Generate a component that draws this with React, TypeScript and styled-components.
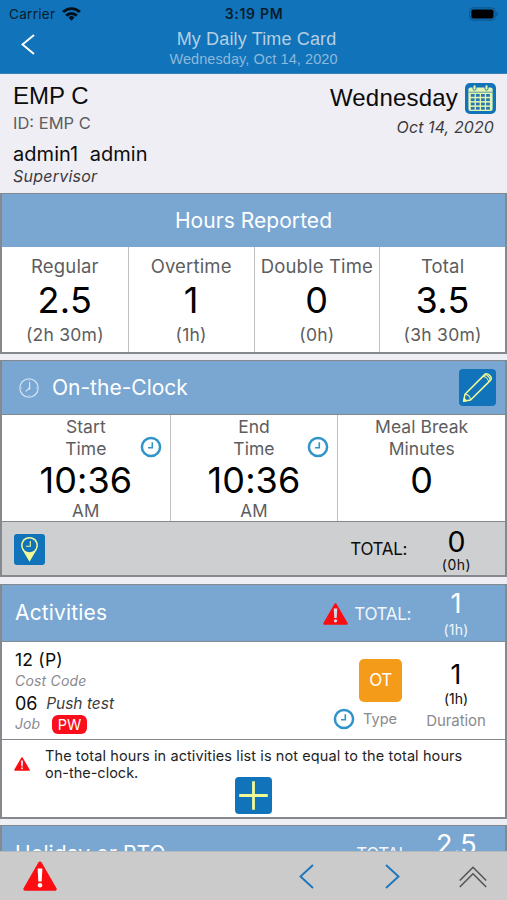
import React from 'react';
import styled, { createGlobalStyle } from 'styled-components';

const sans = 'Inter, "Liberation Sans", sans-serif';
const grotesk = '"Liberation Sans", Arial, sans-serif';
const edge = '#85898d';
const brand = '#1173ba';
const lemon = '#f0fa96';

const GlobalStyle = createGlobalStyle`
  *, *::before, *::after { box-sizing: border-box; }
  body { margin: 0; background: #efeef4; font-family: ${sans}; color: #0c0c0c; }
  svg { display: block; flex: none; }
`;

const Screen = styled.div`
  display: flex;
  flex-direction: column;
  width: 507px;
  height: 900px;
  overflow: hidden;
  background: #efeef4;
`;

const Label = styled.div<{ $size: number; $line: number; $color?: string; $track?: number; $italic?: boolean; $bold?: boolean; $grotesk?: boolean }>`
  font-family: ${p => (p.$grotesk ? grotesk : sans)};
  font-size: ${p => p.$size}px;
  line-height: ${p => p.$line}px;
  color: ${p => p.$color ?? '#0c0c0c'};
  letter-spacing: ${p => p.$track ?? 0}px;
  font-style: ${p => (p.$italic ? 'italic' : 'normal')};
  font-weight: ${p => (p.$bold ? 600 : 400)};
  white-space: pre;
`;

const Header = styled.header`
  flex: none;
  height: 74px;
  background: ${brand};
  border-bottom: 1px solid #3b82b8;
`;

const StatusBar = styled.div`
  display: grid;
  grid-template-columns: 1fr auto 1fr;
  align-items: center;
  height: 28px;
  padding: 0 8px 0 9px;
`;

const Carrier = styled.div`
  display: flex;
  align-items: center;
  gap: 7px;
`;

const BatterySlot = styled.div`
  justify-self: end;
`;

const NavBar = styled.div`
  display: grid;
  grid-template-columns: 60px 1fr 60px;
  height: 40px;
`;

const BackButton = styled.div`
  padding: 6px 0 0 21px;
`;

const NavTitle = styled.div`
  display: flex;
  flex-direction: column;
  align-items: center;
`;

const NavHeading = styled(Label)`
  padding-left: 6px;
`;

const Person = styled.section`
  flex: none;
  display: flex;
  justify-content: space-between;
  height: 119px;
  padding: 8px 11px 0 13px;
`;

const DayColumn = styled.div`
  display: flex;
  flex-direction: column;
  align-items: flex-end;
`;

const DayRow = styled.div`
  display: flex;
  align-items: center;
  gap: 7px;
  height: 32px;
`;

const DateLabel = styled(Label)`
  padding-right: 2px;
`;

const Panel = styled.section<{ $height: number; $gap?: number }>`
  flex: none;
  display: flex;
  flex-direction: column;
  height: ${p => p.$height}px;
  margin-bottom: ${p => p.$gap ?? 6}px;
  border: 1px solid ${edge};
  border-width: 1px 2px 2px;
  background: #fff;
`;

const PanelHeader = styled.div<{ $height: number; $center?: boolean; $ruled?: boolean }>`
  flex: none;
  display: flex;
  align-items: center;
  justify-content: ${p => (p.$center ? 'center' : 'flex-start')};
  height: ${p => p.$height}px;
  padding: ${p => (p.$center ? '0' : '0 4px 0 13px')};
  background: #79a7d2;
  border-bottom: ${p => (p.$ruled ? `1px solid ${edge}` : '0')};
`;

const ClockTitle = styled.div`
  display: flex;
  align-items: center;
  gap: 13px;
  padding-left: 4px;
`;

const IconInset = styled.div`
  padding-right: 5px;
`;

const Grow = styled.div`
  flex: 1;
`;

const Columns = styled.div<{ $count: number; $height: number }>`
  display: grid;
  grid-template-columns: repeat(${p => p.$count}, 1fr);
  height: ${p => p.$height}px;
`;

const Cell = styled.div<{ $top: number }>`
  position: relative;
  display: flex;
  flex-direction: column;
  align-items: center;
  padding-top: ${p => p.$top}px;
  & + & { border-left: 1px solid #bfc0c2; }
`;

const ClockBadge = styled.div`
  position: absolute;
  right: 8px;
  top: 21px;
`;

const TotalsBar = styled.div`
  display: flex;
  align-items: center;
  flex: 1;
  padding: 1px 3px 0 12px;
  background: #cecfd1;
  border-top: 1px solid ${edge};
`;

const ValueColumn = styled.div<{ $top: number; $width?: number }>`
  align-self: stretch;
  display: flex;
  flex-direction: column;
  align-items: center;
  width: ${p => p.$width ?? 90}px;
  padding-top: ${p => p.$top}px;
`;

const TotalLabel = styled.div`
  display: flex;
  align-items: center;
  gap: 6px;
  padding-top: 1px;
`;

const ClockTotalLabel = styled(Label)`
  padding-right: 4px;
`;

const Activity = styled.div`
  flex: none;
  display: flex;
  height: 98px;
  padding: 6px 0 0 13px;
  border-bottom: 1px solid ${edge};
`;

const ActivityInfo = styled.div`
  flex: 1;
`;

const JobRow = styled.div`
  display: flex;
  align-items: center;
  gap: 9px;
`;

const TagRow = styled.div`
  display: flex;
  align-items: center;
  gap: 12px;
  height: 16px;
`;

const PayTag = styled.div`
  width: 35px;
  height: 19px;
  border-radius: 6px;
  background: #fb0d1b;
  color: #fff;
  font-size: 14.5px;
  line-height: 19px;
  text-align: center;
`;

const TypeColumn = styled.div`
  display: flex;
  flex-direction: column;
  align-items: flex-end;
  width: 80px;
  padding-top: 11px;
`;

const TypeTile = styled.div`
  width: 43px;
  height: 43px;
  margin-bottom: 6px;
  border-radius: 5px;
  background: #f49c1a;
  color: #fff;
  font-size: 17px;
  letter-spacing: -0.5px;
  line-height: 43px;
  text-align: center;
`;

const TypeCaption = styled.div`
  display: flex;
  align-items: center;
  gap: 8px;
  padding-right: 5px;
`;

const Duration = styled.div`
  display: flex;
  flex-direction: column;
  align-items: center;
  width: 98px;
  margin-left: 5px;
  padding-top: 11px;
`;

const Notice = styled.div`
  display: flex;
  gap: 15px;
  height: 37px;
  padding: 7px 0 0 12px;
`;

const NoticeIcon = styled.div`
  padding-top: 10px;
`;

const AddRow = styled.div`
  display: flex;
  justify-content: center;
`;

const Footer = styled.footer`
  position: absolute;
  top: 852px;
  left: 0;
  display: flex;
  align-items: flex-start;
  width: 507px;
  height: 48px;
  padding: 9px 20px 0 23px;
  background: #cbcbcb;
  box-shadow: 0 -1px 0 #b3b8bd;
`;

const Pager = styled.div`
  display: flex;
  gap: 71px;
  padding: 3px 59px 0 0;
`;

const Collapse = styled.div`
  padding-top: 4px;
`;

const WarningIcon = ({ w, h, mark = '#d5dbe8' }: { w: number; h: number; mark?: string }) => (
  <svg width={w} height={h} viewBox="0 0 33 30" preserveAspectRatio="none">
    <path d="M16.5 2.2 31 28H2Z" fill="#fb0d12" stroke="#fb0d12" strokeWidth="3.4" strokeLinejoin="round" />
    <path d="M14.2 7.5h4.6l-.7 13h-3.2Z" fill={mark} />
    <circle cx="16.5" cy="24.3" r="2.2" fill={mark} />
  </svg>
);

const ClockIcon = () => (
  <svg width="22" height="22" viewBox="0 0 22 22" fill="none" stroke="#3194c9">
    <circle cx="11" cy="11" r="9.1" strokeWidth="2.5" />
    <path d="M12.3 6.3v5.4H8" strokeWidth="1.6" />
  </svg>
);

const OutlineClock = () => (
  <svg width="20" height="20" viewBox="0 0 20 20" fill="none" stroke="#d9e7f5">
    <circle cx="10" cy="10" r="9.2" strokeWidth="1.1" />
    <path d="M10.6 4v6.3L6.6 13.4" strokeWidth="1.2" />
    <circle cx="10.3" cy="10.4" r="1" fill="#e6f0fa" stroke="none" />
    <path d="M10 2v1M10 17v1M2 10h1M17 10h1" strokeWidth=".8" />
  </svg>
);

const WifiIcon = () => (
  <svg width="19" height="14" viewBox="0 0 19 14" fill="none" stroke="#04111c" strokeWidth="2.9">
    <path d="M1.1 5a12.1 12.1 0 0 1 16.8 0" />
    <path d="M4.2 8.6a7.7 7.7 0 0 1 10.6 0" />
    <path d="m9.5 13.8-3-3.3a4.3 4.3 0 0 1 6 0Z" fill="#04111c" stroke="none" />
  </svg>
);

const BatteryIcon = () => (
  <svg width="30" height="14" viewBox="0 0 30 14">
    <rect x=".6" y=".9" width="25.6" height="12.2" rx="3.6" fill="none" stroke="#0c5285" />
    <rect x="2.3" y="2.5" width="22.2" height="9" rx="2" fill="#000" />
    <path d="M27.5 5v4c1.9-.6 1.9-3.4 0-4" fill="#0c5285" />
  </svg>
);

const CalendarIcon = () => (
  <svg width="31" height="31" viewBox="0 0 31 31">
    <rect width="31" height="31" rx="5" fill={brand} />
    <rect x="3.4" y="4.5" width="24.2" height="23.5" rx="2" fill="#e3f5b0" />
    <path d="M3.4 9.2h24.2" stroke="#5c9d9b" strokeWidth="1" />
    {[9.5, 21.5].map(x => (
      <rect key={x} x={x - 1.5} y="1.8" width="3" height="5.4" rx="1.5" fill="#e3f5b0" stroke={brand} strokeWidth=".9" />
    ))}
    {[11, 15.3, 19.6, 23.9].map(y =>
      [5.8, 10.9, 16, 21.1].map(x => <rect key={`${x}-${y}`} x={x} y={y} width="3.8" height="2.8" fill="#2878af" />),
    )}
  </svg>
);

const PencilIcon = () => (
  <svg width="37" height="37" viewBox="0 0 37 37" fill="none" stroke={lemon} strokeWidth="1.5" strokeLinejoin="round">
    <rect width="37" height="37" rx="4" fill={brand} stroke="none" />
    <path d="M4.6 32.3 6 25.2 25.6 5.6c2.6-2.8 8.6 2.6 5.8 5.8L11.6 31Z" />
    <path d="M6 25.2c2.9.2 5.2 2.6 5.6 5.8M24 7.4c3 .3 5.4 2.8 5.7 5.8M25.6 5.6c3 .3 5.5 2.9 5.8 5.8" strokeWidth="1.1" />
    <path d="m4.6 32.3.7-3.3 2.5 2.6Z" fill={lemon} strokeWidth=".8" />
  </svg>
);

const PinIcon = () => (
  <svg width="31" height="31" viewBox="0 0 31 31">
    <rect width="31" height="31" rx="3" fill={brand} />
    <path d="M15.5 27.8 8.2 15.5A8.4 8.4 0 1 1 22.8 15.5Z" fill={lemon} />
    <circle cx="15.5" cy="11.4" r="6.9" fill={brand} />
    <path d="M16.3 7v5.2h-4.4" fill="none" stroke={lemon} strokeWidth="1.1" />
  </svg>
);

const PlusIcon = () => (
  <svg width="37" height="37" viewBox="0 0 37 37">
    <rect width="37" height="37" rx="4" fill={brand} />
    <path d="M18.5 4.2v28.6M4.2 18.5h28.6" stroke={lemon} strokeWidth="2.8" />
  </svg>
);

const Chevron = ({ dir, color, w, h, stroke }: { dir: 'left' | 'right'; color: string; w: number; h: number; stroke: number }) => (
  <svg width={w} height={h} viewBox={`0 0 ${w} ${h}`} fill="none" stroke={color} strokeWidth={stroke}>
    <path d={dir === 'left' ? `M${w - 1} 1 1.5 ${h / 2} ${w - 1} ${h - 1}` : `M1 1 ${w - 1.5} ${h / 2} 1 ${h - 1}`} />
  </svg>
);

const DoubleUp = () => (
  <svg width="28" height="24" viewBox="0 0 28 24" fill="none" stroke="#555" strokeWidth="1.6">
    <path d="M.8 15.5 14 2.3l13.2 13.2M.8 22 14 8.8 27.2 22" />
  </svg>
);

const hours = [
  { name: 'Regular', value: '2.5', detail: '(2h 30m)' },
  { name: 'Overtime', value: '1', detail: '(1h)' },
  { name: 'Double Time', value: '0', detail: '(0h)' },
  { name: 'Total', value: '3.5', detail: '(3h 30m)' },
];

const punches = [
  { lines: ['Start', 'Time'], value: '10:36', suffix: 'AM' },
  { lines: ['End', 'Time'], value: '10:36', suffix: 'AM' },
  { lines: ['Meal Break', 'Minutes'], value: '0', suffix: '' },
];

const gray = '#5d5d60';
const light = '#8a8a8e';

export default function App() {
  return (
    <Screen>
      <GlobalStyle />
      <Header>
        <StatusBar>
          <Carrier>
            <Label $size={13.5} $line={28} $color="#071c2e" $track={0.3}>Carrier</Label>
            <WifiIcon />
          </Carrier>
          <Label $size={14} $line={28} $color="#071c2e" $track={0.7} $bold>3:19 PM</Label>
          <BatterySlot><BatteryIcon /></BatterySlot>
        </StatusBar>
        <NavBar>
          <BackButton><Chevron dir="left" color="#fff" w={14} h={21} stroke={2} /></BackButton>
          <NavTitle>
            <NavHeading $size={18} $line={22} $color="#b5cfe2" $track={0.15} $grotesk>My Daily Time Card</NavHeading>
            <Label $size={14.5} $line={18} $color="#8cb9dc" $track={0.08} $grotesk>Wednesday, Oct 14, 2020</Label>
          </NavTitle>
        </NavBar>
      </Header>

      <Person>
        <div>
          <Label $size={24} $line={28} $grotesk>EMP C</Label>
          <Label $size={16.5} $line={27} $color={gray}>ID: EMP C</Label>
          <Label $size={20} $line={34} $track={0.05}>admin1  admin</Label>
          <Label $size={16} $line={11} $color="#3c3c3e" $track={0.23} $italic>Supervisor</Label>
        </div>
        <DayColumn>
          <DayRow>
            <Label $size={24} $line={32} $track={0.2} $grotesk>Wednesday</Label>
            <CalendarIcon />
          </DayRow>
          <DateLabel $size={16} $line={26} $color="#3c3c3e" $track={0.1} $italic>Oct 14, 2020</DateLabel>
        </DayColumn>
      </Person>

      <Panel $height={161}>
        <PanelHeader $height={53} $center>
          <Label $size={21} $line={28} $color="#fff" $track={0.05}>Hours Reported</Label>
        </PanelHeader>
        <Columns $count={4} $height={105}>
          {hours.map(h => (
            <Cell key={h.name} $top={7}>
              <Label $size={18.5} $line={24} $color={gray} $track={0.15}>{h.name}</Label>
              <Label $size={36} $line={44} $color="#000" $track={0.3}>{h.value}</Label>
              <Label $size={17.5} $line={25} $color={gray} $track={0.25}>{h.detail}</Label>
            </Cell>
          ))}
        </Columns>
      </Panel>

      <Panel $height={217} $gap={7}>
        <PanelHeader $height={54} $ruled>
          <ClockTitle>
            <OutlineClock />
            <Label $size={21} $line={28} $color="#fff">On-the-Clock</Label>
          </ClockTitle>
          <Grow />
          <IconInset><PencilIcon /></IconInset>
        </PanelHeader>
        <Columns $count={3} $height={106}>
          {punches.map(p => (
            <Cell key={p.lines[0]} $top={1}>
              {p.lines.map(line => <Label key={line} $size={17.5} $line={21.5} $color={gray} $track={0.05}>{line}</Label>)}
              <Label $size={36} $line={42} $color="#000" $track={0.1}>{p.value}</Label>
              <Label $size={17} $line={20} $color={gray} $track={0.3}>{p.suffix}</Label>
              {p.suffix && <ClockBadge><ClockIcon /></ClockBadge>}
            </Cell>
          ))}
        </Columns>
        <TotalsBar>
          <PinIcon />
          <Grow />
          <ClockTotalLabel $size={17} $line={24} $track={-0.35}>TOTAL:</ClockTotalLabel>
          <ValueColumn $top={3} $width={91}>
            <Label $size={28.5} $line={31} $color="#000">0</Label>
            <Label $size={14} $line={15} $track={0.5}>(0h)</Label>
          </ValueColumn>
        </TotalsBar>
      </Panel>

      <Panel $height={235}>
        <PanelHeader $height={57} $ruled>
          <Label $size={21} $line={30} $color="#fff" $track={0.15}>Activities</Label>
          <Grow />
          <TotalLabel>
            <WarningIcon w={25} h={22} />
            <Label $size={17} $line={24} $color="#f1f6fb" $track={-0.35}>TOTAL:</Label>
          </TotalLabel>
          <ValueColumn $top={3}>
            <Label $size={27} $line={32} $color="#fff">1</Label>
            <Label $size={14} $line={19} $color="#f1f6fb" $track={0.2}>(1h)</Label>
          </ValueColumn>
        </PanelHeader>
        <Activity>
          <ActivityInfo>
            <Label $size={17.5} $line={23} $track={0.2}>12 (P)</Label>
            <Label $size={14} $line={20} $color={light} $track={0.2} $italic>Cost Code</Label>
            <JobRow>
              <Label $size={18} $line={25} $track={-0.2}>06</Label>
              <Label $size={15.5} $line={25} $color="#3c3c3e" $italic>Push test</Label>
            </JobRow>
            <TagRow>
              <Label $size={14} $line={16} $color={light} $italic>Job</Label>
              <PayTag>PW</PayTag>
            </TagRow>
          </ActivityInfo>
          <TypeColumn>
            <TypeTile>OT</TypeTile>
            <TypeCaption>
              <ClockIcon />
              <Label $size={14.5} $line={20} $color={light}>Type</Label>
            </TypeCaption>
          </TypeColumn>
          <Duration>
            <Label $size={26.5} $line={30} $color="#000">1</Label>
            <Label $size={14} $line={19} $track={0}>(1h)</Label>
            <Label $size={15} $line={25} $color={light} $track={-0.1}>Duration</Label>
          </Duration>
        </Activity>
        <Notice>
          <NoticeIcon><WarningIcon w={16} h={14} /></NoticeIcon>
          <div>
            <Label $size={14.5} $line={17} $color="#1e1e1e" $track={0.1}>The total hours in activities list is not equal to the total hours</Label>
            <Label $size={14.5} $line={17} $color="#1e1e1e">on-the-clock.</Label>
          </div>
        </Notice>
        <AddRow><PlusIcon /></AddRow>
      </Panel>

      <Panel $height={120}>
        <PanelHeader $height={56} $ruled>
          <Label $size={21} $line={28} $color="#fff" $track={0.1}>Holiday or PTO</Label>
          <Grow />
          <Label $size={17} $line={24} $color="#f1f6fb" $track={-0.5}>TOTAL:</Label>
          <ValueColumn $top={3} $width={89}>
            <Label $size={27} $line={32} $color="#fff" $track={0.3}>2.5</Label>
          </ValueColumn>
        </PanelHeader>
      </Panel>

      <Footer>
        <WarningIcon w={34} h={30} mark="#fff" />
        <Grow />
        <Pager>
          <Chevron dir="left" color="#1b76bd" w={15} h={25} stroke={1.9} />
          <Chevron dir="right" color="#1b76bd" w={15} h={25} stroke={1.9} />
        </Pager>
        <Collapse><DoubleUp /></Collapse>
      </Footer>
    </Screen>
  );
}
